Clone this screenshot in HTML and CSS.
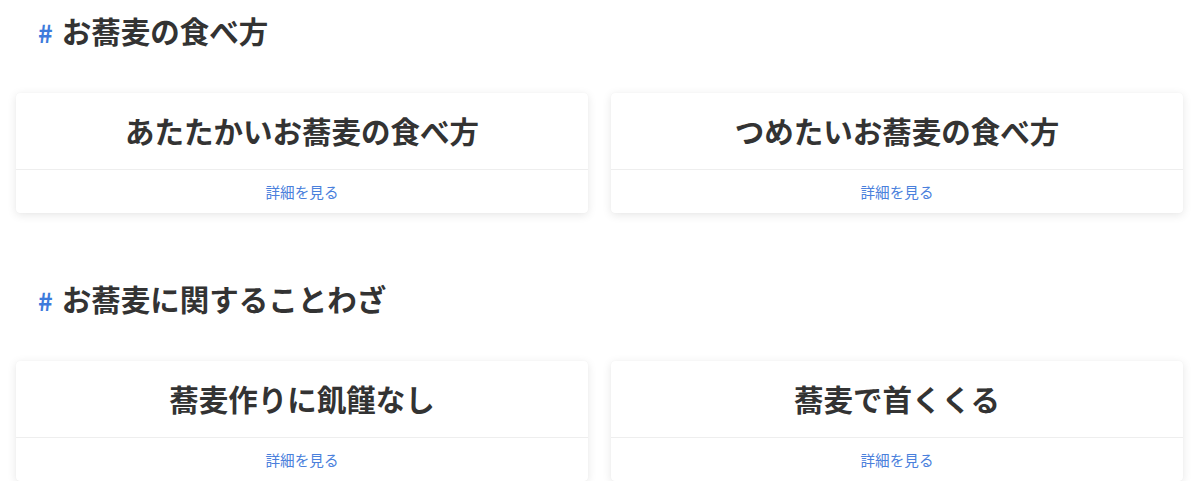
FILE: index.html
```html
<!DOCTYPE html>
<html lang="ja">
<head>
<meta charset="utf-8">
<link rel="stylesheet" href="styles.css">
</head>
<body>
<main class="page">
  <section class="section">
    <h2 class="section-title"><span class="hash">#</span>お蕎麦の食べ方</h2>
    <div class="cards">
      <article class="card">
        <div class="card-body"><h3 class="card-title">あたたかいお蕎麦の食べ方</h3></div>
        <div class="card-footer"><a class="card-link" href="#">詳細を見る</a></div>
      </article>
      <article class="card">
        <div class="card-body"><h3 class="card-title">つめたいお蕎麦の食べ方</h3></div>
        <div class="card-footer"><a class="card-link" href="#">詳細を見る</a></div>
      </article>
    </div>
  </section>
  <section class="section">
    <h2 class="section-title"><span class="hash">#</span>お蕎麦に関することわざ</h2>
    <div class="cards">
      <article class="card">
        <div class="card-body"><h3 class="card-title">蕎麦作りに飢饉なし</h3></div>
        <div class="card-footer"><a class="card-link" href="#">詳細を見る</a></div>
      </article>
      <article class="card">
        <div class="card-body"><h3 class="card-title">蕎麦で首くくる</h3></div>
        <div class="card-footer"><a class="card-link" href="#">詳細を見る</a></div>
      </article>
    </div>
  </section>
</main>
</body>
</html>
```
FILE: styles.css
```css
* { box-sizing: border-box; }
html, body { margin: 0; padding: 0; background: #fff; }
body {
  font-family: "Noto Sans CJK JP", "Noto Sans", sans-serif;
  color: #333;
}
.page {
  padding: 11px 17px 0 16px;
}
.section { margin-bottom: 66px; }
.section:last-child { margin-bottom: 0; }
.section-title {
  margin: 0 0 42px 22px;
  font-size: 29.5px;
  line-height: 38px;
  font-weight: 700;
  color: #333;
}
.hash {
  color: #3d7bdc;
  margin-right: 9px;
  font-size: 25px;
}
.cards {
  display: grid;
  grid-template-columns: 1fr 1fr;
  column-gap: 23px;
}
.card {
  background: #fff;
  border-radius: 4px;
  box-shadow: 0 2px 10px rgba(0,0,0,0.10), 0 0 1px rgba(0,0,0,0.06);
}
.card-body {
  height: 77px;
  display: flex;
  align-items: center;
  justify-content: center;
  border-bottom: 1px solid #eeeeee;
}
.card-title {
  margin: 0;
  font-size: 29.5px;
  font-weight: 700;
  color: #333;
  line-height: 1;
}
.card-footer {
  height: 43px;
  display: flex;
  align-items: center;
  justify-content: center;
}
.card-link {
  font-size: 14.6px;
  color: #4a80dc;
  text-decoration: none;
}
```
